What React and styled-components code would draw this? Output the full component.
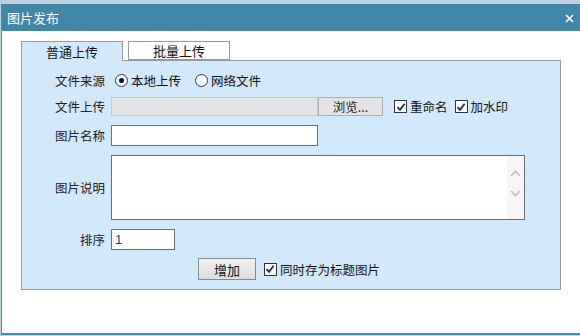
import React from 'react'
import styled, { createGlobalStyle } from 'styled-components'

const Global = createGlobalStyle`
  html, body {
    margin: 0;
    padding: 0;
    background: #ffffff;
    font-family: "Noto Sans CJK SC", "Liberation Sans", sans-serif;
    font-size: 12px;
    color: #222;
  }
  * { box-sizing: border-box; }
`

const Page = styled.div`
  width: 580px;
  height: 336px;
  overflow: hidden;
  background: #b8d0df;
  padding-top: 4px;
`

const Window = styled.div`
  margin-left: 1px;
  height: 331px;
  background: #fff;
  border-left: 1px solid #4a8aab;
  border-bottom: 2px solid #4a8aab;
  display: flex;
  flex-direction: column;
`

const TitleBar = styled.div`
  height: 27px;
  background: #4287a8;
  display: flex;
  align-items: center;
  justify-content: space-between;
  padding: 0 6px 0 5px;
  color: #fff;
  font-size: 13px;
`

const Close = styled.span`
  display: flex;
  align-items: center;
  margin-top: 1px;
`

const Body = styled.div`
  padding: 10px 0 0 19px;
  width: 560px;
`

const Tabs = styled.div`
  display: flex;
  gap: 5px;
  height: 20px;
`

const Tab = styled.div`
  width: 102px;
  height: ${p => (p.active ? '20px' : '19px')};
  border: 1px solid #999;
  border-bottom: ${p => (p.active ? 'none' : '1px solid #999')};
  background: ${p => (p.active ? '#d2e8fb' : '#fff')};
  display: flex;
  align-items: center;
  justify-content: center;
  font-size: 13px;
  color: #111;
  position: relative;
  z-index: 1;
`

const Panel = styled.div`
  margin-top: -1px;
  width: 540px;
  height: 230px;
  border: 1px solid #999;
  background: #d2e8fb;
  padding-top: 9px;
  display: flex;
  flex-direction: column;
`

const Row = styled.div`
  display: flex;
  align-items: center;
  height: ${p => p.h}px;
  margin-top: ${p => p.mt || 0}px;
  justify-content: ${p => (p.center ? 'center' : 'flex-start')};
  padding-right: ${p => (p.center ? '4px' : '0')};
`

const Label = styled.span`
  width: 83px;
  text-align: right;
  margin-right: 6px;
  font-size: 12.5px;
  color: #222;
  white-space: nowrap;
`

const Choice = styled.label`
  display: flex;
  align-items: center;
  margin-left: ${p => p.ml || 0}px;
  font-size: 12.5px;
  color: #111;
  white-space: nowrap;
`

const Radio = styled.span`
  width: 13px;
  height: 13px;
  border-radius: 50%;
  border: 1px solid #333;
  background: #fff;
  display: flex;
  align-items: center;
  justify-content: center;
  margin-right: 3px;
  &::after {
    content: '';
    display: ${p => (p.checked ? 'block' : 'none')};
    width: 5px;
    height: 5px;
    border-radius: 50%;
    background: #111;
  }
`

const Box = styled.span`
  width: 13px;
  height: 13px;
  border: 1px solid #333;
  background: #fff;
  display: flex;
  align-items: center;
  justify-content: center;
  margin-right: 3px;
`

const FileField = styled.div`
  width: 207px;
  height: 19px;
  background: #e4e4e4;
  border: 1px solid #c8c8c8;
`

const Browse = styled.button`
  width: 65px;
  height: 19px;
  margin: 0;
  padding: 0;
  background: #e4e4e4;
  border: 1px solid #adadad;
  font-family: inherit;
  font-size: 12.5px;
  color: #222;
  display: flex;
  align-items: center;
  justify-content: center;
`

const Input = styled.input`
  width: ${p => p.w}px;
  height: 21px;
  border: 1px solid #6e6e6e;
  background: #fff;
  padding: 0 3px;
  font-family: "Liberation Sans", sans-serif;
  font-size: 13px;
  color: #1a3370;
  outline: none;
`

const TextBox = styled.div`
  width: 414px;
  height: 65px;
  border: 1px solid #6e6e6e;
  background: #fff;
  display: flex;
`

const Area = styled.textarea`
  flex: 1;
  border: none;
  resize: none;
  outline: none;
  background: transparent;
`

const Track = styled.div`
  width: 17px;
  background: #f6f6f6;
  display: flex;
  flex-direction: column;
  align-items: center;
  padding-top: 14px;
  gap: 13px;
`

const Button = styled.button`
  width: 58px;
  height: 22px;
  margin: 0 8px 0 0;
  padding: 0;
  border: 1px solid #8a8a8a;
  background: linear-gradient(#f2f2f2, #dcdcdc);
  font-family: inherit;
  font-size: 13px;
  color: #111;
`

const Check = () => (
  <svg width="10" height="10" viewBox="0 0 10 10">
    <path d="M1.5 5.2 L4 7.8 L8.6 1.8" fill="none" stroke="#1c2a66" strokeWidth="1.8" />
  </svg>
)

const Chevron = ({ up }) => (
  <svg width="11" height="7" viewBox="0 0 11 7">
    <path d={up ? 'M1 6 L5.5 1.5 L10 6' : 'M1 1 L5.5 5.5 L10 1'} fill="none" stroke="#bdbdbd" strokeWidth="1.6" />
  </svg>
)

const CheckItem = ({ ml, children }) => (
  <Choice ml={ml}>
    <Box><Check /></Box>
    {children}
  </Choice>
)

const App = () => (
  <Page>
    <Global />
    <Window>
      <TitleBar>
        <span>图片发布</span>
        <Close>
          <svg width="9" height="9" viewBox="0 0 9 9">
            <path d="M1 1 L8 8 M8 1 L1 8" stroke="#fff" strokeWidth="1.7" />
          </svg>
        </Close>
      </TitleBar>
      <Body>
        <Tabs>
          <Tab active>普通上传</Tab>
          <Tab>批量上传</Tab>
        </Tabs>
        <Panel>
          <Row h={20}>
            <Label>文件来源</Label>
            <Choice ml={4}><Radio checked />本地上传</Choice>
            <Choice ml={14}><Radio />网络文件</Choice>
          </Row>
          <Row h={19} mt={7}>
            <Label>文件上传</Label>
            <FileField />
            <Browse>浏览...</Browse>
            <CheckItem ml={11}>重命名</CheckItem>
            <CheckItem ml={7}>加水印</CheckItem>
          </Row>
          <Row h={21} mt={9}>
            <Label>图片名称</Label>
            <Input w={207} defaultValue="" />
          </Row>
          <Row h={65} mt={9}>
            <Label>图片说明</Label>
            <TextBox>
              <Area />
              <Track>
                <Chevron up />
                <Chevron />
              </Track>
            </TextBox>
          </Row>
          <Row h={21} mt={9}>
            <Label>排序</Label>
            <Input w={64} defaultValue="1" />
          </Row>
          <Row h={22} mt={8} center>
            <Button>增加</Button>
            <CheckItem>同时存为标题图片</CheckItem>
          </Row>
        </Panel>
      </Body>
    </Window>
  </Page>
)

export default App
